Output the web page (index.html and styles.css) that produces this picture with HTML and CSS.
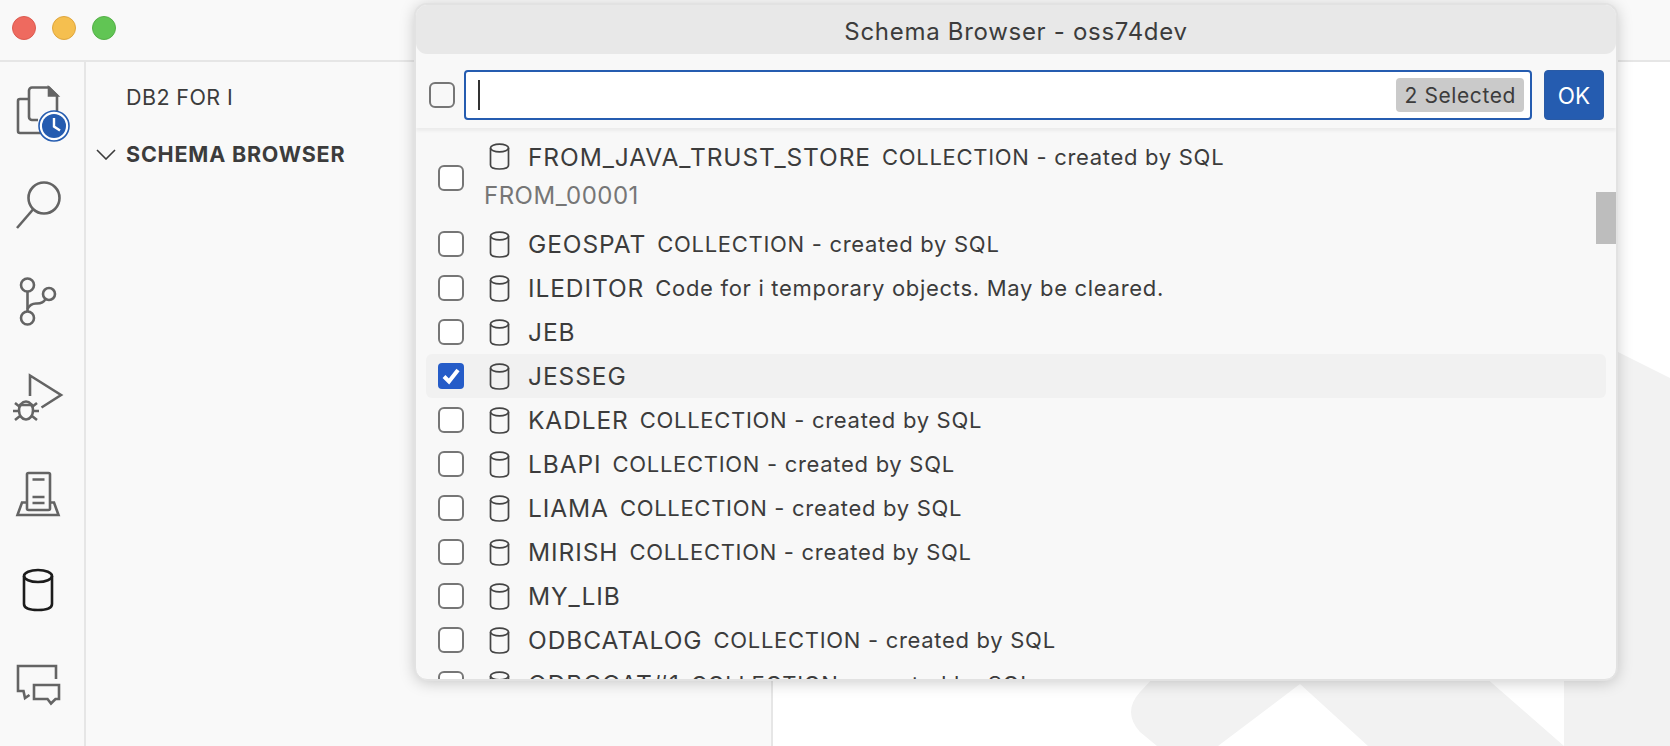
FILE: index.html
```html
<!DOCTYPE html>
<html lang="en">
<head>
  <meta charset="UTF-8">
  <title>Schema Browser</title>
  <link rel="stylesheet" href="styles.css">
</head>
<body>
<div class="titlebar">
  <span class="light red"></span>
  <span class="light yellow"></span>
  <span class="light green"></span>
</div>

<div class="main">
  <div class="activitybar">
    <div class="act-slot">
      <svg class="act-ico" viewBox="0 0 60 60">
        <path d="M21 19H12a2 2 0 0 0-2 2V51a2 2 0 0 0 2 2H34"/>
        <path d="M30 40H24a3 3 0 0 1-3-3V10.500a3 3 0 0 1 3-3H41L49 15.500V32"/>
        <path class="fold" d="M41 8V15.500H49Z"/>
        <circle class="badge-ring" cx="46" cy="46" r="15"/>
        <circle class="badge-fill" cx="46" cy="46" r="12"/>
        <path class="badge-hand" d="M46 38V46.500L52 50.500"/>
      </svg>
    </div>
    <div class="act-slot">
      <svg class="act-ico" viewBox="0 0 60 60">
        <circle cx="36" cy="22" r="15.500"/>
        <path d="M25 33.500L9 52"/>
      </svg>
    </div>
    <div class="act-slot">
      <svg class="act-ico" viewBox="0 0 60 60">
        <circle cx="19.500" cy="13" r="6.500"/>
        <circle cx="19.500" cy="46" r="6.500"/>
        <circle cx="41" cy="22" r="6"/>
        <path d="M19.500 19.500V39.500"/>
        <path d="M37.500 27C35 32 31 31.500 28 31.500C24 31.500 21 34 19.500 37"/>
      </svg>
    </div>
    <div class="act-slot">
      <svg class="act-ico" viewBox="0 0 60 60">
        <path d="M22 28V7.500L53 27L33.500 39.500"/>
        <ellipse cx="18" cy="42.500" rx="7" ry="9"/>
        <path d="M11 37H25M7 35L12 39M29 35L24 39M5 43H11M25 43H31M7 52L12 48M29 52L24 48"/>
      </svg>
    </div>
    <div class="act-slot">
      <svg class="act-ico" viewBox="0 0 60 60">
        <rect x="19" y="9" width="23" height="37" rx="1.500"/>
        <path d="M19 38.500H14L9.500 51H50.500L46 38.500H42"/>
        <path d="M24.500 15.500H36.500M24.500 33H36.500M24.500 39H36.500"/>
      </svg>
    </div>
    <div class="act-slot">
      <svg class="act-ico active" viewBox="0 0 60 60">
        <ellipse cx="30" cy="16" rx="14" ry="6"/>
        <path d="M16 16V44C16 48 22 50 30 50C38 50 44 48 44 44V16"/>
      </svg>
    </div>
    <div class="act-slot">
      <svg class="act-ico" viewBox="0 0 60 60">
        <path d="M48 23V10H10V35H15.500L17 42L21.500 39"/>
        <path d="M26 29H51V43H47.500L43 47.500L39.500 43H26Z"/>
      </svg>
    </div>
  </div>

  <div class="sidebar">
    <div class="side-title">DB2 FOR I</div>
    <div class="side-section">
      <svg class="chevron" viewBox="0 0 20 11"><path d="M1 1L10 10L19 1"/></svg>
      <span>SCHEMA BROWSER</span>
    </div>
  </div>

  <div class="editor">
    <svg class="watermark" viewBox="773 62 897 684">
      <path d="M1500 293L1670 378V746H1564V300Z"/>
      <path d="M1170 660L1140 692Q1122 712 1140 732L1157 746H1218L1300 684L1368 746H1564L1477 670Z"/>
    </svg>
  </div>
</div>

<div class="popup">
  <div class="popup-title">Schema Browser - oss74dev</div>
  <div class="popup-head">
    <span class="check"></span>
    <div class="search">
      <span class="caret"></span>
      <span class="count">2 Selected</span>
    </div>
    <button class="ok">OK</button>
  </div>
  <div class="list">
    <div class="thumb"></div>

    <div class="row tall">
      <span class="check"></span>
      <div class="row-body">
        <div class="row-line">
          <svg class="db" viewBox="0 0 21 27"><ellipse cx="10.500" cy="5" rx="9" ry="3.800"/><path d="M1.500 5V22C1.500 24.500 5.500 26 10.500 26C15.500 26 19.500 24.500 19.500 22V5"/></svg>
          <span class="name">FROM_JAVA_TRUST_STORE</span>
          <span class="desc">COLLECTION - created by SQL</span>
        </div>
        <div class="sub">FROM_00001</div>
      </div>
    </div>

    <div class="row">
      <span class="check"></span>
      <div class="row-line">
        <svg class="db" viewBox="0 0 21 27"><ellipse cx="10.500" cy="5" rx="9" ry="3.800"/><path d="M1.500 5V22C1.500 24.500 5.500 26 10.500 26C15.500 26 19.500 24.500 19.500 22V5"/></svg>
        <span class="name">GEOSPAT</span>
        <span class="desc">COLLECTION - created by SQL</span>
      </div>
    </div>
    <div class="row">
      <span class="check"></span>
      <div class="row-line">
        <svg class="db" viewBox="0 0 21 27"><ellipse cx="10.500" cy="5" rx="9" ry="3.800"/><path d="M1.500 5V22C1.500 24.500 5.500 26 10.500 26C15.500 26 19.500 24.500 19.500 22V5"/></svg>
        <span class="name">ILEDITOR</span>
        <span class="desc">Code for i temporary objects. May be cleared.</span>
      </div>
    </div>
    <div class="row">
      <span class="check"></span>
      <div class="row-line">
        <svg class="db" viewBox="0 0 21 27"><ellipse cx="10.500" cy="5" rx="9" ry="3.800"/><path d="M1.500 5V22C1.500 24.500 5.500 26 10.500 26C15.500 26 19.500 24.500 19.500 22V5"/></svg>
        <span class="name">JEB</span>
      </div>
    </div>
    <div class="row hover">
      <span class="check on">
        <svg viewBox="0 0 26 26"><path d="M6 13.500L11 18.500L20 7"/></svg>
      </span>
      <div class="row-line">
        <svg class="db" viewBox="0 0 21 27"><ellipse cx="10.500" cy="5" rx="9" ry="3.800"/><path d="M1.500 5V22C1.500 24.500 5.500 26 10.500 26C15.500 26 19.500 24.500 19.500 22V5"/></svg>
        <span class="name">JESSEG</span>
      </div>
    </div>
    <div class="row">
      <span class="check"></span>
      <div class="row-line">
        <svg class="db" viewBox="0 0 21 27"><ellipse cx="10.500" cy="5" rx="9" ry="3.800"/><path d="M1.500 5V22C1.500 24.500 5.500 26 10.500 26C15.500 26 19.500 24.500 19.500 22V5"/></svg>
        <span class="name">KADLER</span>
        <span class="desc">COLLECTION - created by SQL</span>
      </div>
    </div>
    <div class="row">
      <span class="check"></span>
      <div class="row-line">
        <svg class="db" viewBox="0 0 21 27"><ellipse cx="10.500" cy="5" rx="9" ry="3.800"/><path d="M1.500 5V22C1.500 24.500 5.500 26 10.500 26C15.500 26 19.500 24.500 19.500 22V5"/></svg>
        <span class="name">LBAPI</span>
        <span class="desc">COLLECTION - created by SQL</span>
      </div>
    </div>
    <div class="row">
      <span class="check"></span>
      <div class="row-line">
        <svg class="db" viewBox="0 0 21 27"><ellipse cx="10.500" cy="5" rx="9" ry="3.800"/><path d="M1.500 5V22C1.500 24.500 5.500 26 10.500 26C15.500 26 19.500 24.500 19.500 22V5"/></svg>
        <span class="name">LIAMA</span>
        <span class="desc">COLLECTION - created by SQL</span>
      </div>
    </div>
    <div class="row">
      <span class="check"></span>
      <div class="row-line">
        <svg class="db" viewBox="0 0 21 27"><ellipse cx="10.500" cy="5" rx="9" ry="3.800"/><path d="M1.500 5V22C1.500 24.500 5.500 26 10.500 26C15.500 26 19.500 24.500 19.500 22V5"/></svg>
        <span class="name">MIRISH</span>
        <span class="desc">COLLECTION - created by SQL</span>
      </div>
    </div>
    <div class="row">
      <span class="check"></span>
      <div class="row-line">
        <svg class="db" viewBox="0 0 21 27"><ellipse cx="10.500" cy="5" rx="9" ry="3.800"/><path d="M1.500 5V22C1.500 24.500 5.500 26 10.500 26C15.500 26 19.500 24.500 19.500 22V5"/></svg>
        <span class="name">MY_LIB</span>
      </div>
    </div>
    <div class="row">
      <span class="check"></span>
      <div class="row-line">
        <svg class="db" viewBox="0 0 21 27"><ellipse cx="10.500" cy="5" rx="9" ry="3.800"/><path d="M1.500 5V22C1.500 24.500 5.500 26 10.500 26C15.500 26 19.500 24.500 19.500 22V5"/></svg>
        <span class="name">ODBCATALOG</span>
        <span class="desc">COLLECTION - created by SQL</span>
      </div>
    </div>
    <div class="row">
      <span class="check"></span>
      <div class="row-line">
        <svg class="db" viewBox="0 0 21 27"><ellipse cx="10.500" cy="5" rx="9" ry="3.800"/><path d="M1.500 5V22C1.500 24.500 5.500 26 10.500 26C15.500 26 19.500 24.500 19.500 22V5"/></svg>
        <span class="name">ODBCCAT#1</span>
        <span class="desc">COLLECTION - created by SQL</span>
      </div>
    </div>
  </div>
</div>
</body>
</html>
```

FILE: styles.css
```css
* {
  box-sizing: border-box;
}
body {
  margin: 0;
  width: 1670px;
  height: 746px;
  overflow: hidden;
  display: flex;
  flex-direction: column;
  font-family: Inter, "Noto Sans", sans-serif;
  color: #3c3c3c;
  background: #fff;
}

/* window chrome */
.titlebar {
  height: 62px;
  flex: none;
  display: flex;
  align-items: center;
  gap: 16px;
  padding: 0 0 4px 12px;
  background: #f9f9f9;
  border-bottom: 2px solid #e6e6e6;
}
.light {
  width: 24px;
  height: 24px;
  border-radius: 50%;
}
.red { background: #ee6a5f; border: 1px solid #dc5b50; }
.yellow { background: #f5bf4f; border: 1px solid #dfa63e; }
.green { background: #61c554; border: 1px solid #55b048; }

.main {
  flex: 1;
  display: flex;
  min-height: 0;
}

/* activity bar */
.activitybar {
  width: 86px;
  flex: none;
  padding-left: 8px;
  background: #f9f9f9;
  border-right: 2px solid #e6e6e6;
}
.act-slot {
  height: 96px;
  display: flex;
  align-items: center;
}
.act-ico {
  width: 60px;
  height: 60px;
  overflow: visible;
  fill: none;
  stroke: #646464;
  stroke-width: 2.6;
}
.act-ico.active {
  stroke: #1c1c1c;
}
.fold { fill: #646464; }
.badge-ring { fill: #fff; stroke: #255cb0; stroke-width: 1.6; }
.badge-fill { fill: #255cb0; stroke: none; }
.badge-hand { stroke: #fff; stroke-width: 2.4; }

/* sidebar */
.sidebar {
  width: 687px;
  flex: none;
  background: #f9f9f9;
  border-right: 2px solid #e6e6e6;
  padding-top: 22px;
}
.side-title {
  padding-left: 40px;
  font-size: 21.500px;
  letter-spacing: 0.4px;
  line-height: 26px;
}
.side-section {
  display: flex;
  align-items: center;
  margin-top: 31px;
  padding-left: 10px;
  font-size: 21.500px;
  font-weight: 700;
  letter-spacing: 0.8px;
  line-height: 26px;
}
.chevron {
  width: 20px;
  height: 11px;
  margin-right: 10px;
  fill: none;
  stroke: #3c3c3c;
  stroke-width: 1.6;
}

/* editor with the faded logo */
.editor {
  flex: 1;
  position: relative;
  overflow: hidden;
  background: #fff;
}
.watermark {
  position: absolute;
  left: 0;
  top: 0;
  width: 897px;
  height: 684px;
  fill: #f2f2f2;
}

/* quick pick */
.popup {
  position: absolute;
  left: 415px;
  top: 4px;
  width: 1202px;
  height: 676px;
  display: flex;
  flex-direction: column;
  overflow: hidden;
  background: #f8f8f8;
  border: 1px solid #e2e2e2;
  border-radius: 12px;
  box-shadow: 0 0 0 1px #e2e2e2, 0 2px 16px rgba(0, 0, 0, 0.22);
}
.popup-title {
  height: 49px;
  flex: none;
  display: flex;
  align-items: center;
  justify-content: center;
  padding-top: 3px;
  background: #e8e8e8;
  border-radius: 11px;
  font-size: 24px;
  letter-spacing: 0.7px;
}
.popup-head {
  height: 74px;
  flex: none;
  position: relative;
  display: flex;
  align-items: center;
  padding: 16px 12px 8px 13px;
  box-shadow: 0 3px 3px rgba(0, 0, 0, 0.05);
}
.search {
  flex: 1;
  height: 50px;
  margin: 0 12px 0 9px;
  display: flex;
  align-items: center;
  justify-content: space-between;
  padding: 0 6px 0 12px;
  background: #fff;
  border: 2px solid #255cb0;
  border-radius: 4px;
}
.caret {
  width: 2px;
  height: 30px;
  background: #333;
}
.count {
  height: 34px;
  padding: 0 8px;
  display: flex;
  align-items: center;
  background: #cacaca;
  border-radius: 4px;
  font-size: 21px;
  letter-spacing: 0.6px;
}
.ok {
  width: 60px;
  height: 50px;
  border: 1px solid #2a5ba6;
  border-radius: 4px;
  background: #255cb0;
  color: #fff;
  font-family: inherit;
  font-size: 22.500px;
  padding: 0;
}
.check {
  width: 26px;
  height: 26px;
  flex: none;
  background: #fff;
  border: 2px solid #767676;
  border-radius: 6px;
}
.popup-head .check {
  background: #f8f8f8;
}
.check.on {
  background: #255cc8;
  border-width: 0;
  border-radius: 4px;
}
.check.on svg {
  display: block;
  width: 26px;
  height: 26px;
  fill: none;
  stroke: #fff;
  stroke-width: 4;
}

/* list */
.list {
  flex: 1;
  min-height: 0;
  position: relative;
  overflow: hidden;
  padding: 6px 10px 0;
}
.thumb {
  position: absolute;
  right: 0;
  top: 64px;
  width: 20px;
  height: 52px;
  background: #bdbdbd;
}
.row {
  height: 44px;
  display: flex;
  align-items: center;
  padding-left: 12px;
  border-radius: 6px;
}
.row.tall {
  height: 88px;
}
.row.hover {
  background: #f1f1f1;
}
.row-body {
  margin-bottom: 4px;
}
.row-line {
  display: flex;
  align-items: center;
  margin-left: 25px;
}
.sub {
  margin: 11px 0 0 20px;
  font-size: 24px;
  letter-spacing: 0.5px;
  line-height: 28px;
  color: #767676;
}
.db {
  width: 21px;
  height: 27px;
  flex: none;
  margin-right: 18px;
  fill: none;
  stroke: #444;
  stroke-width: 1.700;
}
.name {
  font-size: 24.500px;
  letter-spacing: 0.9px;
  line-height: 28px;
  white-space: nowrap;
}
.desc {
  margin-left: 11px;
  font-size: 22px;
  letter-spacing: 0.7px;
  line-height: 28px;
  white-space: nowrap;
}
```
